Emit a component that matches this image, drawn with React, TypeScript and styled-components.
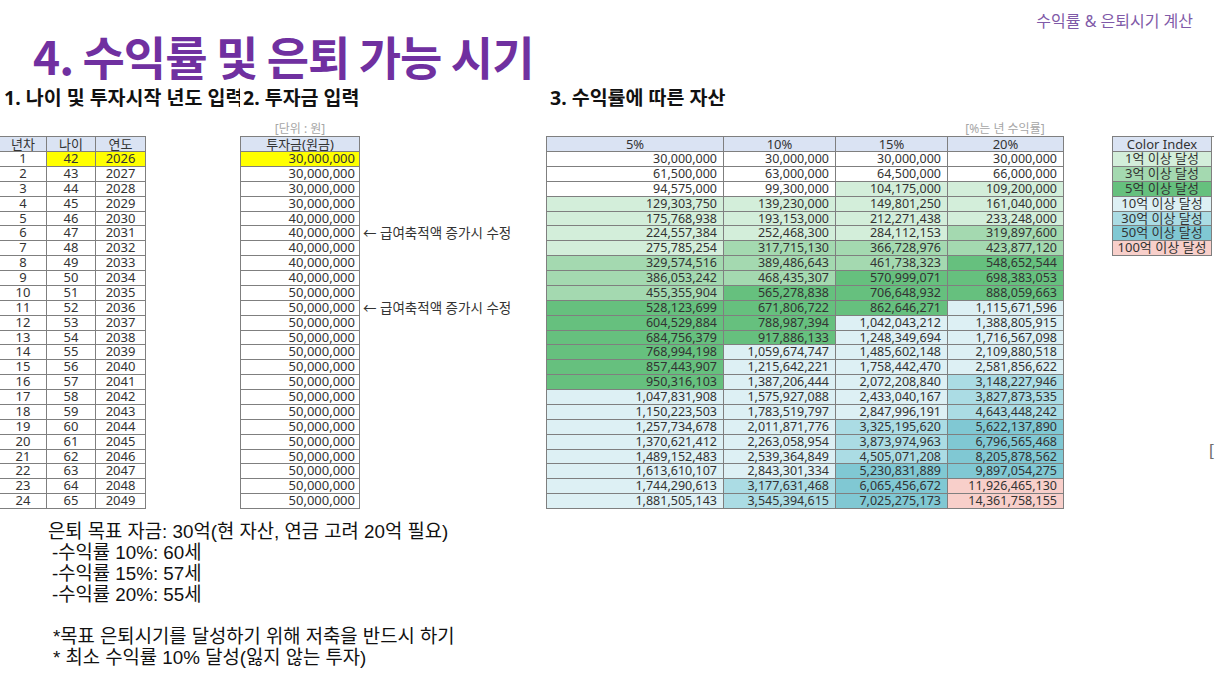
import React from "react";
import styled, { createGlobalStyle } from "styled-components";

const GlobalStyle = createGlobalStyle`
  html, body { margin: 0; padding: 0; background: #fff; }
  body { font-family: "Noto Sans", "Noto Sans CJK KR", sans-serif; color: #333; }
  * { box-sizing: border-box; }
`;

const RH = 14.875;
const LINE = "#7f7f7f";
const HEAD_BG = "#dae3f3";
const YELLOW = "#ffff00";

const Page = styled.div`
  width: 1216px;
  height: 684px;
  overflow: hidden;
  background: #fff;
`;

const TopBar = styled.div`
  height: 34px;
  padding-top: 6px;
  padding-right: 23px;
  display: flex;
  justify-content: flex-end;
  align-items: center;
  font-family: "Noto Sans", "Noto Sans CJK KR", sans-serif;
  font-size: 16px;
  color: #7f5aa8;
`;

const Title = styled.h1`
  margin: 0;
  height: 42px;
  line-height: 42px;
  padding-left: 33px;
  font-family: "Noto Sans CJK KR", sans-serif;
  font-size: 46px;
  font-weight: 700;
  letter-spacing: -1px;
  color: #7030a0;
  white-space: nowrap;
`;

const Headings = styled.div`
  margin-top: 8px;
  height: 28px;
  display: grid;
  grid-template-columns: 240px 306px 1fr;
  align-items: center;
`;

const Heading = styled.div<{ $pad: number; $clip?: boolean }>`
  padding-left: ${(p) => p.$pad}px;
  font-family: "Noto Sans", "Noto Sans CJK KR", sans-serif;
  font-weight: 700;
  font-size: 19.5px;
  line-height: 28px;
  color: #111;
  white-space: nowrap;
  overflow-x: ${(p) => (p.$clip ? "clip" : "visible")};
`;

const Sheet = styled.div`
  margin-top: 9px;
  display: flex;
  align-items: flex-start;
`;

const Block = styled.div<{ $ml: number }>`
  margin-left: ${(p) => p.$ml}px;
  display: flex;
  flex-direction: column;
`;

const LabelRow = styled.div<{ $cols?: string }>`
  height: 15px;
  display: grid;
  grid-template-columns: ${(p) => p.$cols ?? "1fr"};
  font-family: "Noto Sans", "Noto Sans CJK KR", sans-serif;
  font-size: 12px;
  line-height: 15px;
  color: #a6a6a6;
  text-align: center;
  white-space: nowrap;
`;

const Grid = styled.div<{ $cols: string }>`
  display: grid;
  grid-template-columns: ${(p) => p.$cols};
  border-top: 1px solid ${LINE};
  border-left: 1px solid ${LINE};
`;

const Cell = styled.div<{ $bg?: string; $pr?: number; $head?: boolean; $size?: number }>`
  height: ${(p) => (p.$head ? 15 : RH)}px;
  line-height: ${(p) => (p.$head ? 14 : RH - 1)}px;
  border-right: 1px solid ${LINE};
  border-bottom: 1px solid ${LINE};
  background: ${(p) => p.$bg ?? (p.$head ? HEAD_BG : "#fff")};
  text-align: ${(p) => (p.$pr !== undefined ? "right" : "center")};
  padding-right: ${(p) => p.$pr ?? 0}px;
  font-family: "Noto Sans", "Noto Sans CJK KR", sans-serif;
  font-size: ${(p) => p.$size ?? 13}px;
  color: #333;
  white-space: nowrap;
`;

const NotesCol = styled.div`
  width: 186px;
  display: flex;
  flex-direction: column;
  padding-top: 31px;
`;

const NoteRow = styled.div`
  height: ${RH}px;
  line-height: ${RH}px;
  padding-left: 3px;
  font-family: "Noto Sans", "Noto Sans CJK KR", sans-serif;
  font-size: 13.5px;
  color: #333;
  white-space: nowrap;
`;

const InvestWrap = styled.div`
  margin-left: 94px;
  display: flex;
  align-items: flex-start;
`;

const Bracket = styled.div`
  margin-top: 186px;
  margin-left: 97px;
  font-family: "Liberation Sans", sans-serif;
  font-size: 17px;
  line-height: 18px;
  color: #6f6f6f;
`;

const Remarks = styled.div`
  margin-top: 12px;
  font-family: "Liberation Sans", "Noto Sans CJK KR", sans-serif;
  font-size: 18.8px;
  line-height: 21px;
  color: #111;
`;

const RemarkLine = styled.div<{ $indent: number }>`
  height: 21px;
  padding-left: ${(p) => p.$indent}px;
  white-space: nowrap;
`;

const Blank = styled.div`
  height: 21px;
`;

const p5 = [
  "30,000,000", "61,500,000", "94,575,000", "129,303,750", "175,768,938", "224,557,384",
  "275,785,254", "329,574,516", "386,053,242", "455,355,904", "528,123,699", "604,529,884",
  "684,756,379", "768,994,198", "857,443,907", "950,316,103", "1,047,831,908", "1,150,223,503",
  "1,257,734,678", "1,370,621,412", "1,489,152,483", "1,613,610,107", "1,744,290,613", "1,881,505,143",
];
const p10 = [
  "30,000,000", "63,000,000", "99,300,000", "139,230,000", "193,153,000", "252,468,300",
  "317,715,130", "389,486,643", "468,435,307", "565,278,838", "671,806,722", "788,987,394",
  "917,886,133", "1,059,674,747", "1,215,642,221", "1,387,206,444", "1,575,927,088", "1,783,519,797",
  "2,011,871,776", "2,263,058,954", "2,539,364,849", "2,843,301,334", "3,177,631,468", "3,545,394,615",
];
const p15 = [
  "30,000,000", "64,500,000", "104,175,000", "149,801,250", "212,271,438", "284,112,153",
  "366,728,976", "461,738,323", "570,999,071", "706,648,932", "862,646,271", "1,042,043,212",
  "1,248,349,694", "1,485,602,148", "1,758,442,470", "2,072,208,840", "2,433,040,167", "2,847,996,191",
  "3,325,195,620", "3,873,974,963", "4,505,071,208", "5,230,831,889", "6,065,456,672", "7,025,275,173",
];
const p20 = [
  "30,000,000", "66,000,000", "109,200,000", "161,040,000", "233,248,000", "319,897,600",
  "423,877,120", "548,652,544", "698,383,053", "888,059,663", "1,115,671,596", "1,388,805,915",
  "1,716,567,098", "2,109,880,518", "2,581,856,622", "3,148,227,946", "3,827,873,535", "4,643,448,242",
  "5,622,137,890", "6,796,565,468", "8,205,878,562", "9,897,054,275", "11,926,465,130", "14,361,758,155",
];

const LEVELS = [
  { min: 1e10, color: "#f8cfca", label: "100억 이상 달성" },
  { min: 5e9, color: "#80c8d3", label: "50억 이상 달성" },
  { min: 3e9, color: "#abdce4", label: "30억 이상 달성" },
  { min: 1e9, color: "#ddf0f4", label: "10억 이상 달성" },
  { min: 5e8, color: "#66c07e", label: "5억 이상 달성" },
  { min: 3e8, color: "#a4d9b0", label: "3억 이상 달성" },
  { min: 1e8, color: "#d3eeda", label: "1억 이상 달성" },
];

const colorFor = (s: string) => {
  const v = Number(s.replace(/,/g, ""));
  const lv = LEVELS.find((l) => v >= l.min);
  return lv ? lv.color : "#ffffff";
};

const indexOrder = [6, 5, 4, 3, 2, 1, 0].map((i) => LEVELS[i]);

const rows = Array.from({ length: 24 }, (_, i) => ({
  n: i + 1,
  age: 42 + i,
  year: 2026 + i,
  invest: i < 4 ? "30,000,000" : i < 9 ? "40,000,000" : "50,000,000",
  note: i === 5 || i === 10 ? "← 급여축적액 증가시 수정" : "",
}));

const MAIN_COLS = "177px 112px 112px 116px";

export default function App() {
  return (
    <Page>
      <GlobalStyle />
      <TopBar>수익률 &amp; 은퇴시기 계산</TopBar>
      <Title>4. 수익률 및 은퇴 가능 시기</Title>
      <Headings>
        <Heading $pad={4} $clip>1. 나이 및 투자시작 년도 입력</Heading>
        <Heading $pad={3}>2. 투자금 입력</Heading>
        <Heading $pad={4}>3. 수익률에 따른 자산</Heading>
      </Headings>

      <Sheet>
        <Block $ml={-1}>
          <LabelRow />
          <Grid $cols="47px 49px 50px">
            <Cell $head>년차</Cell>
            <Cell $head>나이</Cell>
            <Cell $head>연도</Cell>
            {rows.map((r, i) => (
              <React.Fragment key={r.n}>
                <Cell>{r.n}</Cell>
                <Cell $bg={i === 0 ? YELLOW : undefined}>{r.age}</Cell>
                <Cell $bg={i === 0 ? YELLOW : undefined}>{r.year}</Cell>
              </React.Fragment>
            ))}
          </Grid>
        </Block>

        <InvestWrap>
          <Block $ml={0}>
            <LabelRow>[단위 : 원]</LabelRow>
            <Grid $cols="119px">
              <Cell $head>투자금(원금)</Cell>
              {rows.map((r, i) => (
                <Cell key={r.n} $pr={4} $bg={i === 0 ? YELLOW : undefined}>
                  {r.invest}
                </Cell>
              ))}
            </Grid>
          </Block>
          <NotesCol>
            {rows.map((r) => (
              <NoteRow key={r.n}>{r.note}</NoteRow>
            ))}
          </NotesCol>
        </InvestWrap>

        <Block $ml={0}>
          <LabelRow $cols={MAIN_COLS}>
            <span />
            <span />
            <span />
            <span>[%는 년 수익률]</span>
          </LabelRow>
          <Grid $cols={MAIN_COLS}>
            <Cell $head>5%</Cell>
            <Cell $head>10%</Cell>
            <Cell $head>15%</Cell>
            <Cell $head>20%</Cell>
            {rows.map((r, i) => (
              <React.Fragment key={r.n}>
                {[p5[i], p10[i], p15[i], p20[i]].map((v, c) => (
                  <Cell key={c} $pr={6} $size={12.5} $bg={colorFor(v)}>
                    {v}
                  </Cell>
                ))}
              </React.Fragment>
            ))}
          </Grid>
        </Block>

        <Block $ml={48}>
          <LabelRow />
          <Grid $cols="99px">
            <Cell $head>Color Index</Cell>
            {indexOrder.map((l) => (
              <Cell key={l.label} $bg={l.color}>
                {l.label}
              </Cell>
            ))}
          </Grid>
          <Bracket>[</Bracket>
        </Block>
      </Sheet>

      <Remarks>
        <RemarkLine $indent={48}>은퇴 목표 자금: 30억(현 자산, 연금 고려 20억 필요)</RemarkLine>
        <RemarkLine $indent={52}>-수익률 10%: 60세</RemarkLine>
        <RemarkLine $indent={52}>-수익률 15%: 57세</RemarkLine>
        <RemarkLine $indent={52}>-수익률 20%: 55세</RemarkLine>
        <Blank />
        <RemarkLine $indent={53}>*목표 은퇴시기를 달성하기 위해 저축을 반드시 하기</RemarkLine>
        <RemarkLine $indent={53}>* 최소 수익률 10% 달성(잃지 않는 투자)</RemarkLine>
      </Remarks>
    </Page>
  );
}
